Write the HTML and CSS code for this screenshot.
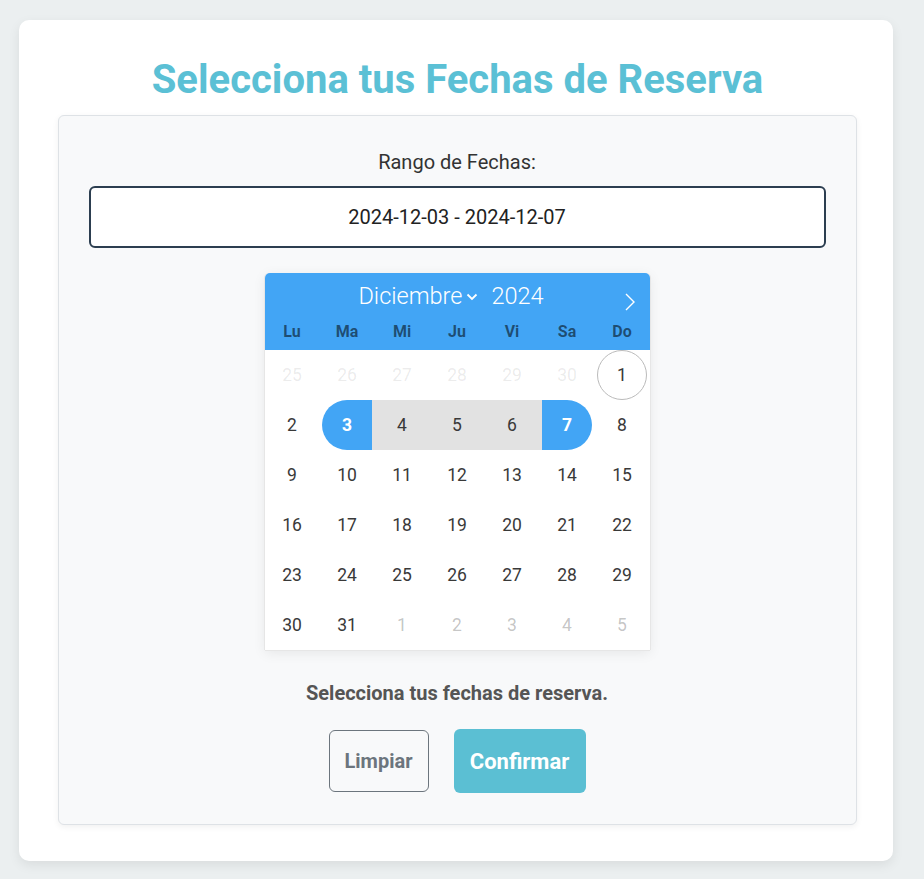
FILE: index.html
```html
<!DOCTYPE html>
<html lang="es">
<head>
<meta charset="utf-8">
<title>Reserva</title>
<link rel="stylesheet" href="styles.css">
</head>
<body>
<div class="card">
  <h1 class="title">Selecciona tus Fechas de Reserva</h1>
  <div class="panel">
    <label class="label" for="rango">Rango de Fechas:</label>
    <input id="rango" class="range-input" type="text" value="2024-12-03 - 2024-12-07" readonly>
    <div class="cal">
      <div class="cal-head">
        <div class="month-row">
          <span class="month">Diciembre</span>
          <svg class="chev" width="12" height="8" viewBox="0 0 12 8"><path d="M1.5 1.5 L6 6 L10.5 1.5" fill="none" stroke="#fff" stroke-width="1.8"/></svg>
          <span class="year">2024</span>
          <svg class="next" width="12" height="18" viewBox="0 0 12 18"><path d="M2 1 L10 9 L2 17" fill="none" stroke="#fff" stroke-width="1.4"/></svg>
        </div>
        <div class="weekdays">
          <span>Lu</span><span>Ma</span><span>Mi</span><span>Ju</span><span>Vi</span><span>Sa</span><span>Do</span>
        </div>
      </div>
      <div class="days">
        <div class="day off"><span>25</span></div>
        <div class="day off"><span>26</span></div>
        <div class="day off"><span>27</span></div>
        <div class="day off"><span>28</span></div>
        <div class="day off"><span>29</span></div>
        <div class="day off"><span>30</span></div>
        <div class="day today"><span>1</span></div>
        <div class="day"><span>2</span></div>
        <div class="day start"><span>3</span></div>
        <div class="day in"><span>4</span></div>
        <div class="day in"><span>5</span></div>
        <div class="day in"><span>6</span></div>
        <div class="day end"><span>7</span></div>
        <div class="day"><span>8</span></div>
        <div class="day"><span>9</span></div>
        <div class="day"><span>10</span></div>
        <div class="day"><span>11</span></div>
        <div class="day"><span>12</span></div>
        <div class="day"><span>13</span></div>
        <div class="day"><span>14</span></div>
        <div class="day"><span>15</span></div>
        <div class="day"><span>16</span></div>
        <div class="day"><span>17</span></div>
        <div class="day"><span>18</span></div>
        <div class="day"><span>19</span></div>
        <div class="day"><span>20</span></div>
        <div class="day"><span>21</span></div>
        <div class="day"><span>22</span></div>
        <div class="day"><span>23</span></div>
        <div class="day"><span>24</span></div>
        <div class="day"><span>25</span></div>
        <div class="day"><span>26</span></div>
        <div class="day"><span>27</span></div>
        <div class="day"><span>28</span></div>
        <div class="day"><span>29</span></div>
        <div class="day"><span>30</span></div>
        <div class="day"><span>31</span></div>
        <div class="day next-m"><span>1</span></div>
        <div class="day next-m"><span>2</span></div>
        <div class="day next-m"><span>3</span></div>
        <div class="day next-m"><span>4</span></div>
        <div class="day next-m"><span>5</span></div>
      </div>
    </div>
    <p class="hint">Selecciona tus fechas de reserva.</p>
    <div class="actions">
      <button class="btn btn-clear" type="button">Limpiar</button>
      <button class="btn btn-confirm" type="button">Confirmar</button>
    </div>
  </div>
</div>
</body>
</html>
```
FILE: styles.css
```css
* { box-sizing: border-box; }
html, body { margin: 0; }
body {
  background: #ebeff0;
  font-family: Roboto, "Liberation Sans", Arial, sans-serif;
  padding: 20px 31px 18px 19px;
}
.card {
  width: 874px;
  height: 841px;
  background: #fff;
  border-radius: 10px;
  box-shadow: 0 4px 12px rgba(0,0,0,0.08);
  padding: 36px 36px 0 39px;
}
.title {
  margin: 0 0 11px;
  text-align: center;
  font-size: 40px;
  line-height: 48px;
  font-weight: 700;
  color: #5bc0d5;
}
.panel {
  background: #f8f9fa;
  border: 1px solid #dee2e6;
  border-radius: 6px;
  box-shadow: 0 2px 6px rgba(0,0,0,0.06);
  padding: 34px 31px 31px 30px;
  display: flex;
  flex-direction: column;
  align-items: center;
  height: 710px;
}
.label {
  font-size: 20px;
  line-height: 24px;
  color: #333;
  margin-bottom: 12px;
}
.range-input {
  width: 737px;
  height: 62px;
  border: 2px solid #2c3e50;
  border-radius: 6px;
  background: #fff;
  text-align: center;
  font-family: Roboto, "Liberation Sans", Arial, sans-serif;
  font-size: 20px;
  color: #222;
  margin: 0 0 25px;
  padding: 0;
}
.cal {
  width: 385px;
  background: #fff;
  border-radius: 5px 5px 0 0;
  box-shadow: 1px 0 0 #e6e6e6, -1px 0 0 #e6e6e6, 0 1px 0 #e6e6e6, 0 3px 13px rgba(0,0,0,0.08);
}
.cal-head {
  background: #42a5f5;
  border-radius: 5px 5px 0 0;
  color: #fff;
}
.month-row {
  height: 43px;
  display: flex;
  align-items: center;
  justify-content: center;
  position: relative;
  padding-right: 12px;
  padding-top: 2px;
}
.month {
  font-size: 23.5px;
  font-weight: 300;
}
.chev { margin: 3px 0 0 4px; }
.year {
  font-size: 23.5px;
  font-weight: 300;
  margin-left: 13px;
}
.next {
  position: absolute;
  right: 14px;
  top: 20px;
}
.weekdays {
  height: 34px;
  display: grid;
  grid-template-columns: repeat(7, 55px);
  align-items: center;
  padding-bottom: 3px;
}
.weekdays span {
  text-align: center;
  font-size: 16px;
  font-weight: 700;
  color: rgba(0,0,0,0.54);
}
.days {
  display: grid;
  grid-template-columns: repeat(7, 55px);
  grid-auto-rows: 50px;
}
.day {
  display: flex;
  align-items: center;
  justify-content: center;
  font-size: 17.5px;
  color: #393939;
}
.day span {
  width: 50px;
  height: 50px;
  display: flex;
  align-items: center;
  justify-content: center;
  border-radius: 25px;
}
.day.off { color: rgba(57,57,57,0.1); }
.day.next-m { color: rgba(57,57,57,0.3); }
.day.today span { border: 1px solid #bbb; }
.day.in { background: #e2e2e2; }
.day.start { background: linear-gradient(to right, transparent 50%, #e2e2e2 50%); }
.day.end { background: linear-gradient(to right, #e2e2e2 50%, transparent 50%); }
.day.start span, .day.end span {
  background: #42a5f5;
  color: #fff;
  font-weight: 700;
}
.day.start span { border-radius: 25px 0 0 25px; }
.day.end span { border-radius: 0 25px 25px 0; }
.hint {
  margin: 31px 0 0;
  font-size: 20px;
  line-height: 24px;
  font-weight: 700;
  color: #555;
}
.actions {
  margin-top: 24px;
  display: flex;
  align-items: center;
  gap: 25px;
}
.btn {
  font-family: Roboto, "Liberation Sans", Arial, sans-serif;
  font-weight: 700;
  border-radius: 6px;
  cursor: pointer;
}
.btn-clear {
  width: 100px;
  height: 62px;
  border: 1px solid #6c757d;
  background: transparent;
  color: #6c757d;
  font-size: 20px;
}
.btn-confirm {
  width: 132px;
  height: 64px;
  border: none;
  background: #5bbfd3;
  color: #fff;
  font-size: 22px;
}
```
